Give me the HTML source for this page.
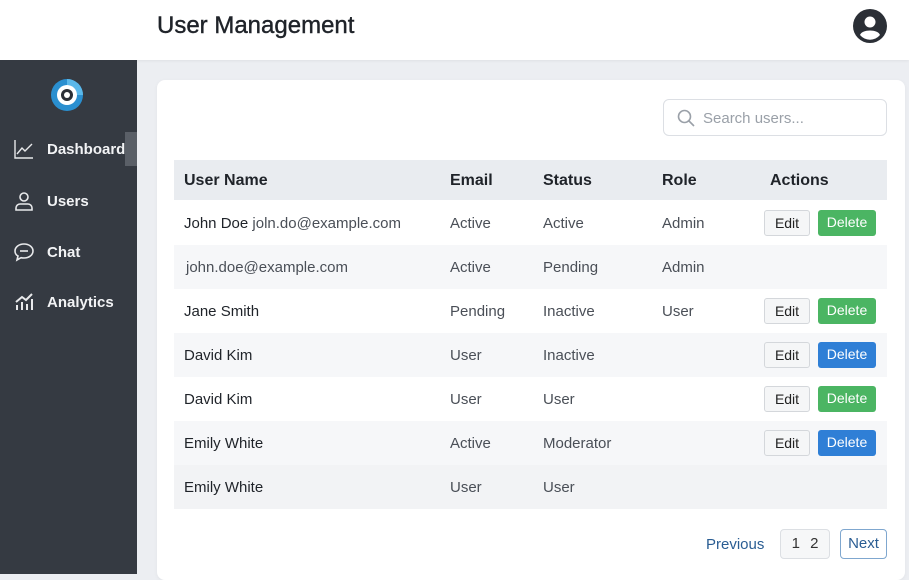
<!DOCTYPE html><html><head><style>
*{box-sizing:border-box;margin:0;padding:0}
body{width:909px;height:574px;overflow:hidden;font-family:"Liberation Sans",sans-serif;background:#eceef2;position:relative}
.hdr{position:absolute;left:0;top:0;width:909px;height:60px;background:#fff;box-shadow:0 1px 3px rgba(0,0,0,.06)}
.hdr h1{position:absolute;left:157px;top:12px;font-size:24px;font-weight:normal;color:#1f2329;-webkit-text-stroke:0.4px #1f2329}
.side{position:absolute;left:0;top:60px;width:137px;height:514px;background:#353a42}
.nav{position:absolute;left:14px;color:#f2f3f5;font-size:15px;font-weight:bold;display:flex;align-items:center}
.nav svg{margin-right:13px}
.card{position:absolute;left:157px;top:80px;width:748px;height:500px;background:#fff;border-radius:8px;box-shadow:0 1px 4px rgba(0,0,0,.05)}
.search{position:absolute;left:663px;top:99px;width:224px;height:37px;border:1px solid #dcdfe4;border-radius:6px;color:#9aa0a8;font-size:15px;padding:10px 0 0 39px}
.row{position:absolute;left:174px;width:713px;height:44px;font-size:15px;color:#4a4f57}
.row span{position:absolute;top:14px}
.hrow{background:#e9ecf0;color:#1f2329;font-size:16px;font-weight:600;height:40px;top:160px}
.hrow span{top:12px}
.alt{background:#f6f7f9}
.n{color:#1f2329;font-weight:500}
.b{position:absolute;top:9px;height:26px;border-radius:3px;font-size:14px;text-align:center;line-height:25px}
.e{left:590px;width:46px;background:#f5f6f7;border:1px solid #d4d7db;color:#222}
.d{left:644px;width:58px;color:#fff}
.g{background:#4bb563}.bl{background:#2f7fd6}
</style></head><body>
<div class="hdr"><h1>User Management</h1>
<svg style="position:absolute;left:852px;top:8px" width="36" height="36" viewBox="0 0 36 36"><circle cx="18" cy="18" r="17" fill="#2b2f36"/><circle cx="18" cy="14" r="5.5" fill="#fff"/><path d="M8 27c2-6 18-6 20 0a13 13 0 0 1-20 0z" fill="#fff"/></svg></div>
<div class="side">
<svg style="position:absolute;left:50px;top:18px" width="34" height="34" viewBox="0 0 34 34"><circle cx="17" cy="17" r="16" fill="#2a8fd0"/><path d="M17 1a16 16 0 0 1 16 16h-6a10 10 0 0 0-10-10z" fill="#5bb8ea"/><circle cx="17" cy="17" r="10" fill="#fff"/><circle cx="17" cy="17" r="6" fill="#2b2f36"/><circle cx="17" cy="17" r="3" fill="#fff"/></svg>
<div style="position:absolute;left:125px;top:72px;width:12px;height:34px;background:#5a5f67"></div>
<div class="nav" style="top:79px"><svg width="20" height="20" viewBox="0 0 20 20" fill="none" stroke="#e8e9eb" stroke-width="1.4"><path d="M1 1v18h18M3 15l5-6 3 3 7-7"/></svg>Dashboard</div>
<div class="nav" style="top:131px"><svg width="20" height="20" viewBox="0 0 20 20" fill="none" stroke="#e8e9eb" stroke-width="1.6"><circle cx="10" cy="6" r="4"/><path d="M2 19v-2a4 4 0 0 1 4-4h8a4 4 0 0 1 4 4v2z"/></svg>Users</div>
<div class="nav" style="top:182px"><svg width="20" height="20" viewBox="0 0 20 20" fill="none" stroke="#e8e9eb" stroke-width="1.6"><path d="M10 2c5 0 9 3 9 7s-4 7-9 7c-1 0-2 0-3-.3L3 18l1-4C2 13 1 11 1 9c0-4 4-7 9-7z"/><path d="M6 9h8"/></svg>Chat</div>
<div class="nav" style="top:232px"><svg width="20" height="20" viewBox="0 0 20 20" fill="none" stroke="#e8e9eb" stroke-width="2"><path d="M3 18v-5M8 18v-8M13 18v-6M18 18V7M2 10l6-5 4 3 6-6"/></svg>Analytics</div>
</div>
<div class="card"></div>
<div class="search">Search users...<svg style="position:absolute;left:13px;top:9px" width="18" height="18" viewBox="0 0 18 18" fill="none" stroke="#9aa0a8" stroke-width="1.6"><circle cx="7.5" cy="7.5" r="6"/><path d="M12 12l5 5"/></svg></div>
<div class="row hrow"><span style="left:10px">User Name</span><span style="left:276px">Email</span><span style="left:369px">Status</span><span style="left:488px">Role</span><span style="left:596px">Actions</span></div>
<div class="row" style="top:201px"><span class="n" style="left:10px">John Doe <span style="position:static;color:#4a4f57;font-weight:normal">joln.do@example.com</span></span><span style="left:276px">Active</span><span style="left:369px">Active</span><span style="left:488px">Admin</span><div class="b e">Edit</div><div class="b d g">Delete</div></div>
<div class="row alt" style="top:245px"><span style="left:12px">john.doe@example.com</span><span style="left:276px">Active</span><span style="left:369px">Pending</span><span style="left:488px">Admin</span></div>
<div class="row" style="top:289px"><span class="n" style="left:10px">Jane Smith</span><span style="left:276px">Pending</span><span style="left:369px">Inactive</span><span style="left:488px">User</span><div class="b e">Edit</div><div class="b d g">Delete</div></div>
<div class="row alt" style="top:333px"><span class="n" style="left:10px">David Kim</span><span style="left:276px">User</span><span style="left:369px">Inactive</span><div class="b e">Edit</div><div class="b d bl">Delete</div></div>
<div class="row" style="top:377px"><span class="n" style="left:10px">David Kim</span><span style="left:276px">User</span><span style="left:369px">User</span><div class="b e">Edit</div><div class="b d g">Delete</div></div>
<div class="row alt" style="top:421px"><span class="n" style="left:10px">Emily White</span><span style="left:276px">Active</span><span style="left:369px">Moderator</span><div class="b e">Edit</div><div class="b d bl">Delete</div></div>
<div class="row" style="top:465px;background:#f2f3f5"><span class="n" style="left:10px">Emily White</span><span style="left:276px">User</span><span style="left:369px">User</span></div>
<div style="position:absolute;left:706px;top:536px;color:#2a5d93;font-size:15px">Previous</div>
<div style="position:absolute;left:780px;top:529px;width:50px;height:30px;border:1px solid #dcdfe3;border-radius:4px;background:#f6f7f8;font-size:15px;color:#333;line-height:28px;text-align:center;word-spacing:6px">1 2</div>
<div style="position:absolute;left:840px;top:529px;width:47px;height:30px;border:1px solid #7fa7cf;border-radius:4px;font-size:15px;color:#2a5d93;line-height:28px;text-align:center">Next</div>
</body></html>
